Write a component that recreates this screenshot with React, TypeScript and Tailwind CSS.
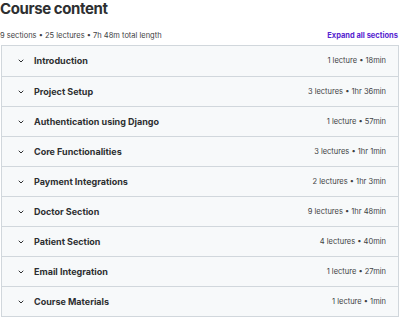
import React from "react";

const sections = [
  ["Introduction", "1 lecture • 18min"],
  ["Project Setup", "3 lectures • 1hr 36min"],
  ["Authentication using Django", "1 lecture • 57min"],
  ["Core Functionalities", "3 lectures • 1hr 1min"],
  ["Payment Integrations", "2 lectures • 1hr 3min"],
  ["Doctor Section", "9 lectures • 1hr 48min"],
  ["Patient Section", "4 lectures • 40min"],
  ["Email Integration", "1 lecture • 27min"],
  ["Course Materials", "1 lecture • 1min"],
];

function Chevron() {
  return (
    <svg width="8" height="8" viewBox="0 0 24 24" fill="none" stroke="#2d2f31" strokeWidth="3" strokeLinecap="round" strokeLinejoin="round">
      <path d="M6 9l6 6 6-6" />
    </svg>
  );
}

export default function App() {
  return (
    <div className="w-[400px] h-[318px] bg-white overflow-hidden text-[#2d2f31]" style={{ fontFamily: "Inter, 'Noto Sans', sans-serif" }}>
      <div className="text-[15px] font-bold leading-[17px] tracking-[-0.4px]">Course content</div>
      <div className="flex items-center justify-between mt-[12px] pr-[2px] h-[14px]">
        <span className="text-[7.5px] text-[#3e4143]">9 sections • 25 lectures • 7h 48m total length</span>
        <span className="text-[7.5px] font-bold text-[#5624d0]">Expand all sections</span>
      </div>
      <div className="mt-[2px] mx-[1px] border border-[#d1d7dc]">
        {sections.map(([t, m], i) => (
          <div key={i} className={`flex items-center h-[30px] bg-[#f7f9fa] pl-[15px] pr-[12px] ${i > 0 ? "border-t border-[#d1d7dc]" : ""}`}>
            <Chevron />
            <span className="ml-[9px] text-[9px] font-bold">{t}</span>
            <span className="ml-auto text-[7.5px] text-[#3e4143]">{m}</span>
          </div>
        ))}
      </div>
    </div>
  );
}
